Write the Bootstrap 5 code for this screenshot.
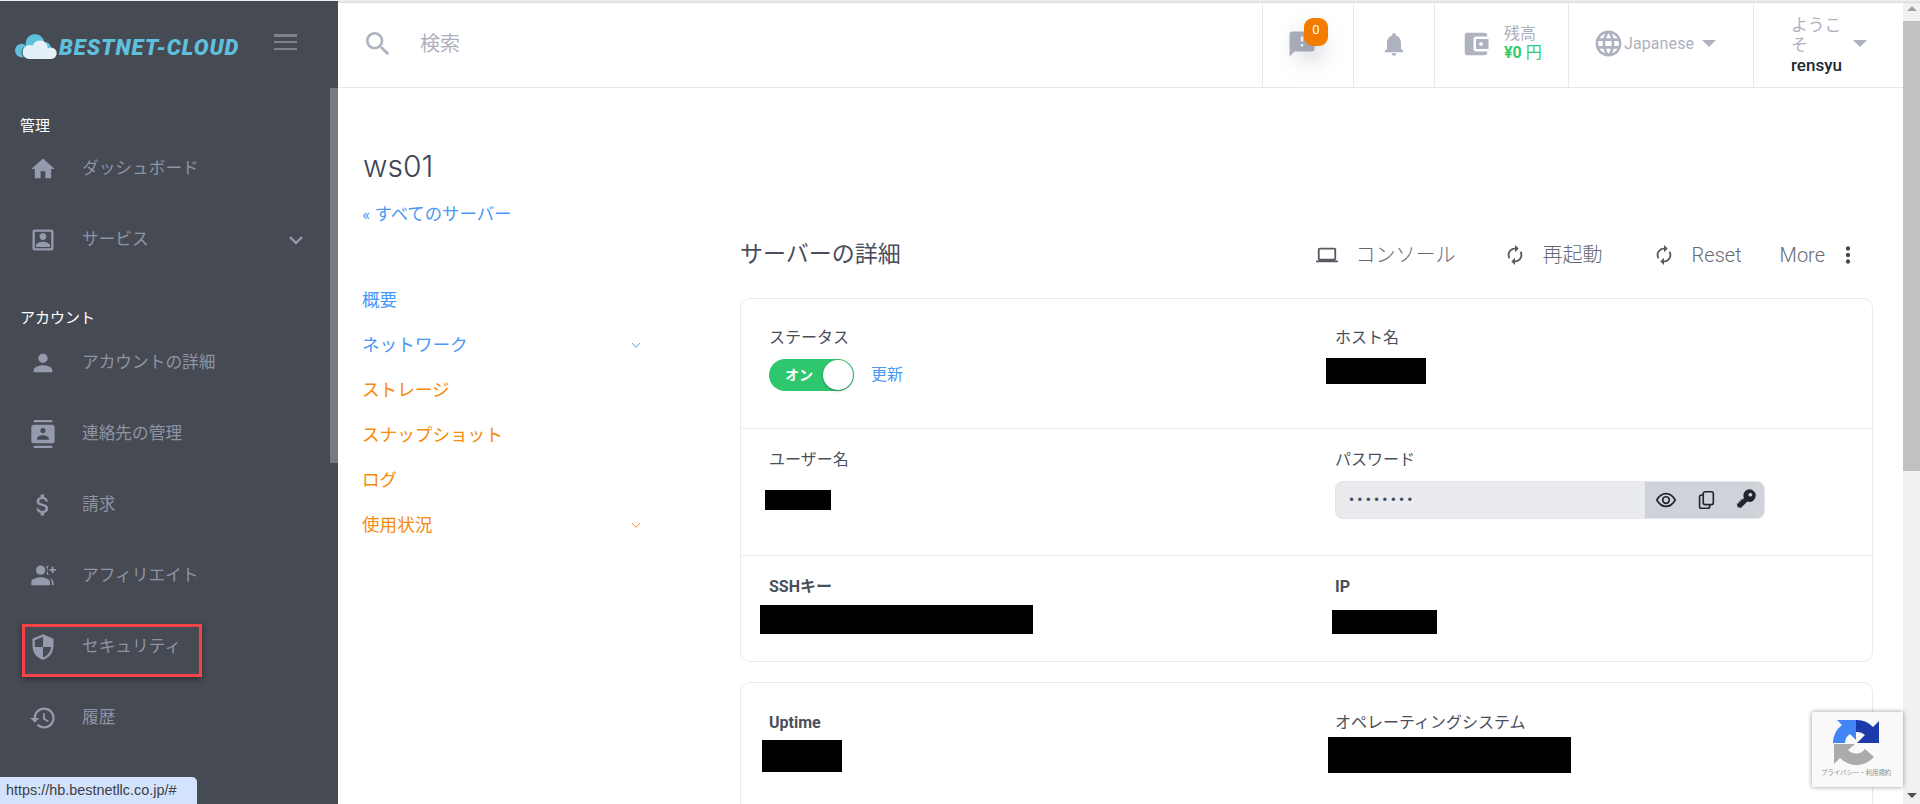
<!DOCTYPE html>
<html lang="ja">
<head>
<meta charset="utf-8">
<title>ws01</title>
<link href="https://cdn.jsdelivr.net/npm/bootstrap@5.3.0/dist/css/bootstrap.min.css" rel="stylesheet">
<style>
html,body{height:804px;overflow:hidden;background:#fff}
body{font-family:Roboto,"Noto Sans CJK JP",sans-serif;font-weight:300;color:#4a4f5c}
.app-shell{height:804px}
.side-panel{width:338px;background:#464a53;flex:none;height:804px;position:relative}
.side-thumb{position:absolute;right:0;top:88px;width:8px;height:375px;background:#787a83}
.brand-zone{height:88px;padding-left:15px;padding-right:41px}
.brand-cloud{width:42px;height:25px;margin-right:2px;margin-top:5px;flex:none}
.brand-word{font-family:Roboto,sans-serif;font-weight:900;font-style:italic;font-size:22px;letter-spacing:1px;color:#5fc0de;white-space:nowrap;margin-top:6px}
.burger{width:23px;height:16px;margin-left:auto;margin-top:-4px;display:flex;flex-direction:column;justify-content:space-between}
.burger i{display:block;height:2.5px;background:#7e808b}
.side-label{color:#fff;font-size:15px;line-height:20px;padding-left:20px;font-weight:400}
.label-first{margin-top:28px;margin-bottom:1px}
.label-next{margin-top:36px;margin-bottom:3px}
.side-item{height:64px;margin-bottom:7px;padding-left:29px;padding-right:30px;color:#8f94a4;font-size:16.7px;font-weight:400;text-decoration:none}
.side-item:hover{color:#8f94a4}
.side-icon{width:28px;height:28px;fill:#959aad;flex:none;margin-right:25px}
.side-caret{width:24px;height:24px;fill:none;stroke:#959aad;stroke-width:2.4;margin-left:auto}
.red-mark{position:absolute;left:22px;top:624px;width:180px;height:53px;border:3px solid #f44347;box-shadow:0 2px 6px rgba(0,0,0,.4)}
.status-tip{position:absolute;left:0;bottom:0;height:27px;width:197px;background:#d3e3fd;border-top-right-radius:5px;color:#3c4043;font:400 14.4px/27px "Liberation Sans",sans-serif;padding-left:6px;white-space:nowrap;z-index:5}
.main-area{flex:1;min-width:0;height:804px;overflow:hidden}
.top-bar{height:88px;border-bottom:1px solid #e7e9ed}
.search-zone{padding-left:24px;color:#aeb1bd;font-size:20px;font-weight:400}
.search-zone svg{width:32px;height:32px;fill:#b0b3c0;margin-right:26px}
.top-cell{height:87px;border-left:1px solid #e7e9ed;flex:none;position:relative}
.cell-msg{width:91px;padding-right:12px}.cell-bell{width:81px}.cell-wallet{width:134px;padding-left:26px}.cell-lang{width:185px}.cell-user{width:150px}
.top-icon{fill:#aeb1c0}
.wallet-pic{margin-right:13px;flex:none}
.count-pill{position:absolute;left:41px;top:18px;width:24px;height:28px;border-radius:9px;background:#f37b00;color:#fff;font-size:13px;font-weight:400;text-align:center;line-height:24px;box-shadow:-6px 14px 22px rgba(90,95,110,.28)}
.bal-word{font-size:16px;line-height:18px;color:#aeb1bd;font-weight:400}
.bal-num{font-size:16px;line-height:18px;color:#2ecc71;font-weight:700;margin-top:1px}
.bal-yen{font-weight:400}
.lang-word{font-size:16px;color:#aeb1bd;font-weight:400;letter-spacing:.1px}
.tri{width:0;height:0;border-left:7px solid transparent;border-right:7px solid transparent;border-top:7px solid #aeb1c0}
.user-stack{width:56px;line-height:20px;font-size:16.8px;color:#aeb1bd;margin-left:37px;font-weight:400;padding-top:2px}
.user-name{color:#23272f;font-weight:500;font-size:17px;line-height:20px;margin-top:0}
.caret-user{margin-left:6px}
.page-body{padding:0 30px 0 25px}
.server-title{font-size:30px;line-height:36px;color:#3e4454;margin:60px 0 0;font-family:Inter,Roboto,sans-serif;font-weight:300}
.back-link{display:block;color:#4a97f5;font-size:17.4px;line-height:24px;margin:18px 0 0 -1px;text-decoration:none;font-weight:400}
.sub-nav{width:377px;flex:none}
.sub-link{display:flex;align-items:center;height:45px;width:279px;font-size:17.6px;font-weight:400;text-decoration:none;justify-content:space-between}
.is-blue{color:#4a97f5}.is-orange{color:#f58a0b}
.sub-link svg{width:10px;height:7px;fill:none;stroke:currentColor;stroke-width:.9}
.sub-list{margin:52px 0 0 -1px}
.detail-zone{flex:1;min-width:0;padding-top:124px}
.detail-head{height:86px}
.detail-title{font-size:23px;color:#4a4f5c;font-weight:400;margin:0}
.act-btn{color:#666a72;font-size:20px;font-weight:300;text-decoration:none;display:flex;align-items:center}
.act-btn svg{fill:#555a62;width:22px;height:22px;flex:none}
.act-1{margin-right:48px}.act-1 svg{margin-right:18px}
.act-2{margin-right:50px}.act-2 svg{margin-right:17px}
.act-3{margin-right:38px}.act-3 svg{margin-right:17px}
.act-4{margin-right:12px}.act-4 svg{margin-left:10px;fill:#444950;width:26px;height:26px}
.info-box{border:1px solid #e8eaf0;border-radius:10px;margin-bottom:20px;background:#fff}
.info-strip{padding:0 28px}
.strip-a{height:130px;border-bottom:1px solid #e8eaf0}
.strip-b{height:127px;border-bottom:1px solid #e8eaf0}
.strip-c{height:105px}
.strip-d{height:140px}
.info-col{flex:1 1 0;min-width:0}
.info-col:first-child{flex:0 0 566px}
.info-name{font-size:16px;line-height:22px;color:#4a4f5c;font-weight:400}
.strong-name{font-weight:700}
.top-a{padding-top:28px}.top-b{padding-top:20px}.top-c{padding-top:20px}.top-d{padding-top:29px}
.power-row{margin-top:10px}
.power-switch{width:85px;height:32px;background:#2fc76d;border-radius:16px;position:relative;color:#fff;font-size:14px;font-weight:700;line-height:32px;padding-left:16px}
.power-knob{position:absolute;right:1px;top:1px;width:30px;height:30px;border-radius:50%;background:#fff;box-shadow:0 1px 3px rgba(0,0,0,.3)}
.refresh-link{color:#4a97f5;font-size:16px;margin-left:17px;text-decoration:none;font-weight:400}
.ink{background:#000}
.ink-host{width:100px;height:26px;margin:9px 0 0 -9px}
.ink-user{width:66px;height:20px;margin:19px 0 0 -4px}
.ink-ssh{width:273px;height:29px;margin:7px 0 0 -9px}
.ink-ip{width:105px;height:24px;margin:12px 0 0 -3px}
.ink-up{width:80px;height:32px;margin:6px 0 0 -7px}
.ink-os{width:243px;height:36px;margin:3px 0 0 -7px}
.pass-box{width:430px;height:38px;border-radius:8px;background:#e9ebef;margin-top:10px;border:1px solid #e2e4e9;overflow:hidden}
.pass-dots{flex:1;padding-left:13px;font-size:14px;letter-spacing:3.3px;color:#454a54;font-weight:700;line-height:36px}
.pass-tools{width:119px;height:38px;background:#ced3da;padding:0 8px 0 10px}
.pass-tools svg{width:22px;height:22px}
.fake-scroll{width:17px;flex:none;background:#f1f1f1;height:804px}
.scroll-arrow{height:17px}
.tri-up{width:0;height:0;border-left:5px solid transparent;border-right:5px solid transparent;border-bottom:5px solid #a3a3a3}
.tri-down{width:0;height:0;border-left:5px solid transparent;border-right:5px solid transparent;border-top:5px solid #505050}
.scroll-thumb{height:450px;background:#c1c1c1;margin-top:4px}
.scroll-gap{flex:1}
.captcha{position:absolute;left:1812px;top:712px;width:91px;height:75px;background:#f9f9f9;box-shadow:0 0 5px rgba(0,0,0,.4);border-radius:2px 0 0 2px;z-index:4}
.captcha svg{width:46px;height:45px;margin:8px 0 0 21px;display:block}
.captcha span{display:block;font-size:6.4px;line-height:9px;color:#8b8b8b;font-weight:400;margin:4px 0 0 9px;white-space:nowrap}
.top-line{position:absolute;left:0;right:0;top:0;height:1px;background:#eceded;z-index:6}
.top-fade{position:absolute;left:338px;right:0;top:0;height:3px;background:linear-gradient(#f2f2f2,#d8dadd);z-index:6}
</style>
</head>
<body>
<div class="top-line"></div>
<div class="top-fade"></div>
<div class="app-shell d-flex">
  <aside class="side-panel">
    <div class="brand-zone d-flex align-items-center">
      <svg class="brand-cloud" viewBox="0 0 42 25"><g fill="#5fc0de"><circle cx="6.700" cy="16.500" r="6.700"/><circle cx="20" cy="9.300" r="9.300"/><circle cx="30" cy="14" r="6"/><rect x="6" y="15" width="20" height="8.200"/></g><path fill="#3f5560" d="M13.500 25c-3.900 0-7-3-7-6.800s3.100-6.800 7-6.800z"/><g fill="#e4f0f8"><circle cx="14.500" cy="18" r="7"/><circle cx="25" cy="14.500" r="8"/><circle cx="36" cy="19.300" r="5.700"/><rect x="14" y="18" width="22" height="7"/></g></svg>
      <span class="brand-word">BESTNET-CLOUD</span>
      <div class="burger"><i></i><i></i><i></i></div>
    </div>
    <div class="side-thumb"></div>
    <div class="side-label label-first">管理</div>
    <a href="#" class="side-item d-flex align-items-center"><svg class="side-icon" viewBox="0 0 24 24"><path d="M10 20v-6h4v6h5v-8h3L12 3 2 12h3v8z"/></svg>ダッシュボード</a>
    <a href="#" class="side-item d-flex align-items-center"><svg class="side-icon" viewBox="0 0 24 24"><path d="M19 5v14H5V5h14m0-2H5c-1.1 0-2 .9-2 2v14c0 1.1.9 2 2 2h14c1.1 0 2-.9 2-2V5c0-1.1-.9-2-2-2zm-7 9c1.65 0 3-1.35 3-3s-1.35-3-3-3-3 1.35-3 3 1.35 3 3 3zm-6 6h12v-1.5c0-2-4-3.1-6-3.1s-6 1.1-6 3.1V18z"/></svg>サービス<svg class="side-caret" viewBox="0 0 24 24"><path d="M6 9l6 6 6-6"/></svg></a>
    <div class="side-label label-next">アカウント</div>
    <a href="#" class="side-item d-flex align-items-center"><svg class="side-icon" viewBox="0 0 24 24"><path d="M12 12c2.21 0 4-1.79 4-4s-1.79-4-4-4-4 1.79-4 4 1.79 4 4 4zm0 2c-2.67 0-8 1.34-8 4v2h16v-2c0-2.66-5.33-4-8-4z"/></svg>アカウントの詳細</a>
    <a href="#" class="side-item d-flex align-items-center"><svg class="side-icon" viewBox="0 0 24 24"><path d="M20 0H4v2h16V0zM4 24h16v-2H4v2zM20 4H4c-1.1 0-2 .9-2 2v12c0 1.1.9 2 2 2h16c1.1 0 2-.9 2-2V6c0-1.1-.9-2-2-2zm-8 2.75c1.24 0 2.25 1.01 2.25 2.25s-1.01 2.25-2.25 2.25S9.75 10.24 9.75 9 10.76 6.75 12 6.75zM17 17H7v-1.5c0-1.67 3.33-2.5 5-2.5s5 .83 5 2.5V17z"/></svg>連絡先の管理</a>
    <a href="#" class="side-item d-flex align-items-center"><svg class="side-icon" viewBox="0 0 24 24"><path d="M11.8 10.9c-2.27-.59-3-1.2-3-2.15 0-1.09 1.01-1.85 2.7-1.85 1.78 0 2.44.85 2.5 2.1h2.21c-.07-1.72-1.12-3.3-3.21-3.81V3h-3v2.16c-1.94.42-3.5 1.68-3.5 3.61 0 2.31 1.91 3.46 4.7 4.13 2.5.6 3 1.48 3 2.41 0 .69-.49 1.79-2.7 1.79-2.06 0-2.87-.92-2.98-2.1h-2.2c.12 2.19 1.76 3.42 3.68 3.83V21h3v-2.15c1.95-.37 3.5-1.5 3.5-3.55 0-2.84-2.43-3.81-4.7-4.4z"/></svg>請求</a>
    <a href="#" class="side-item d-flex align-items-center"><svg class="side-icon" viewBox="0 0 24 24"><path d="M10 11c2.2 0 4-1.8 4-4s-1.8-4-4-4-4 1.8-4 4 1.800 4 4 4zm0 2c-2.7 0-8 1.300-8 4v3h16v-3c0-2.700-5.300-4-8-4zm6-2.100c.4.100.700.100 1 .100-.8-1-1-2.500-1-4 0-1.500.2-3 .9-4-1.200.1-2.400.9-2 1.500.6 1 .9 1.600.9 2.500 0 1.200-.5 2.700-1 3.600zm1 2.500c1.500.9 2.500 2.100 2.500 3.600v3h1.500v-3c0-1.800-2-3-4-3.600zM21 6V4h-1.500v2h-2v1.500h2v2H21v-2h2V6z"/></svg>アフィリエイト</a>
    <a href="#" class="side-item d-flex align-items-center"><svg class="side-icon" viewBox="0 0 24 24"><path d="M12 1L3 5v6c0 5.550 3.840 10.740 9 12 5.160-1.260 9-6.450 9-12V5l-9-4zm0 10.990h7c-.53 4.120-3.280 7.790-7 8.940V12H5V6.300l7-3.110v8.800z"/></svg>セキュリティ</a>
    <a href="#" class="side-item d-flex align-items-center"><svg class="side-icon" viewBox="0 0 24 24"><path d="M13 3c-4.970 0-9 4.030-9 9H1l3.890 3.890.07.14L9 12H6c0-3.870 3.130-7 7-7s7 3.130 7 7-3.130 7-7 7c-1.930 0-3.680-.79-4.940-2.060l-1.420 1.420C8.270 19.990 10.510 21 13 21c4.970 0 9-4.030 9-9s-4.030-9-9-9zm-1 5v5l4.280 2.540.72-1.210-3.500-2.080V8H12z"/></svg>履歴</a>
    <div class="red-mark"></div>
    <div class="status-tip">https://hb.bestnetllc.co.jp/#</div>
  </aside>
  <main class="main-area">
    <header class="top-bar d-flex">
      <div class="search-zone d-flex align-items-center flex-grow-1"><svg viewBox="0 0 24 24"><path d="M15.500 14h-.79l-.28-.27C15.410 12.590 16 11.110 16 9.500 16 5.910 13.090 3 9.500 3S3 5.910 3 9.500 5.910 16 9.500 16c1.610 0 3.090-.59 4.230-1.570l.27.28v.79l5 4.990L20.490 19l-4.990-5zm-6 0C7.010 14 5 11.990 5 9.500S7.010 5 9.500 5 14 7.010 14 9.500 11.990 14 9.500 14z"/></svg>検索</div>
      <div class="top-cell cell-msg d-flex align-items-center justify-content-center"><svg class="top-icon" width="30" height="30" viewBox="0 0 24 24"><path d="M20 2H4c-1.100 0-1.990.9-1.990 2L2 22l4-4h14c1.100 0 2-.9 2-2V4c0-1.100-.9-2-2-2zm-7 12h-2v-2h2v2zm0-4h-2V6h2v4z"/></svg><span class="count-pill">0</span></div>
      <div class="top-cell cell-bell d-flex align-items-center justify-content-center"><svg class="top-icon" width="28" height="28" viewBox="0 0 24 24"><path d="M12 22c1.100 0 2-.9 2-2h-4c0 1.100.89 2 2 2zm6-6v-5c0-3.070-1.640-5.640-4.500-6.320V4c0-.83-.67-1.500-1.500-1.500s-1.500.67-1.500 1.500v.68C7.630 5.360 6 7.920 6 11v5l-2 2v1h16v-1l-2-2z"/></svg></div>
      <div class="top-cell cell-wallet d-flex align-items-center"><svg class="top-icon wallet-pic" width="30" height="30" viewBox="0 0 24 24"><path d="M21 18v1c0 1.100-.9 2-2 2H5c-1.110 0-2-.9-2-2V5c0-1.100.89-2 2-2h14c1.100 0 2 .9 2 2v1h-9c-1.110 0-2 .9-2 2v8c0 1.100.89 2 2 2h9zm-9-2h10V8H12v8zm4-2.500c-.83 0-1.500-.67-1.500-1.500s.67-1.500 1.500-1.500 1.500.67 1.500 1.500-.67 1.500-1.500 1.500z"/></svg><div><div class="bal-word">残高</div><div class="bal-num">¥0 <span class="bal-yen">円</span></div></div></div>
      <div class="top-cell cell-lang d-flex align-items-center ps-4"><svg class="top-icon" width="31" height="31" viewBox="0 0 24 24"><path d="M11.990 2C6.470 2 2 6.480 2 12s4.470 10 9.990 10C17.520 22 22 17.520 22 12S17.520 2 11.990 2zm6.930 6h-2.950c-.32-1.250-.78-2.450-1.380-3.560 1.840.63 3.370 1.910 4.330 3.560zM12 4.040c.83 1.200 1.480 2.530 1.910 3.960h-3.820c.43-1.430 1.080-2.760 1.910-3.960zM4.260 14C4.100 13.360 4 12.690 4 12s.1-1.360.26-2h3.380c-.08.66-.14 1.320-.14 2 0 .68.06 1.340.14 2H4.260zm.82 2h2.950c.32 1.250.78 2.450 1.380 3.560-1.840-.63-3.370-1.900-4.330-3.560zm2.950-8H5.080c.96-1.660 2.490-2.930 4.330-3.560C8.810 5.550 8.350 6.750 8.030 8zM12 19.960c-.83-1.200-1.480-2.530-1.910-3.960h3.820c-.43 1.430-1.080 2.760-1.910 3.960zM14.340 14H9.660c-.09-.66-.16-1.320-.16-2 0-.68.07-1.350.16-2h4.680c.09.65.16 1.320.16 2 0 .68-.07 1.340-.16 2zm.25 5.560c.6-1.110 1.060-2.310 1.380-3.560h2.950c-.96 1.650-2.490 2.930-4.330 3.560zM16.360 14c.08-.66.14-1.320.14-2 0-.68-.06-1.340-.14-2h3.380c.16.64.26 1.310.26 2s-.1 1.360-.26 2h-3.380z"/></svg><span class="lang-word ms-0">Japanese</span><span class="tri ms-2"></span></div>
      <div class="top-cell cell-user d-flex align-items-center"><div class="user-stack">ようこそ<div class="user-name">rensyu</div></div><span class="tri caret-user"></span></div>
    </header>
    <div class="page-body">
      <div class="d-flex">
        <nav class="sub-nav">
          <h1 class="server-title">ws01</h1>
          <a class="back-link" href="#">« すべてのサーバー</a>
          <div class="sub-list">
            <a class="sub-link is-blue" href="#">概要</a>
            <a class="sub-link is-blue" href="#">ネットワーク<svg viewBox="0 0 10 7"><path d="M1 1l4 4.500L9 1"/></svg></a>
            <a class="sub-link is-orange" href="#">ストレージ</a>
            <a class="sub-link is-orange" href="#">スナップショット</a>
            <a class="sub-link is-orange" href="#">ログ</a>
            <a class="sub-link is-orange" href="#">使用状況<svg viewBox="0 0 10 7"><path d="M1 1l4 4.500L9 1"/></svg></a>
          </div>
        </nav>
        <section class="detail-zone">
          <div class="detail-head d-flex align-items-center justify-content-between">
            <h2 class="detail-title">サーバーの詳細</h2>
            <div class="d-flex align-items-center">
              <a class="act-btn act-1" href="#"><svg viewBox="0 0 24 24"><path d="M20 18c1.100 0 1.990-.9 1.990-2L22 6c0-1.100-.9-2-2-2H4c-1.100 0-2 .9-2 2v10c0 1.100.9 2 2 2H0v2h24v-2h-4zM4 6h16v10H4V6z"/></svg>コンソール</a>
              <a class="act-btn act-2" href="#"><svg viewBox="0 0 24 24"><path d="M12 6v3l4-4-4-4v3c-4.420 0-8 3.580-8 8 0 1.570.46 3.030 1.240 4.260L6.700 14.800c-.45-.83-.7-1.790-.7-2.800 0-3.310 2.690-6 6-6zm6.760 1.740L17.300 9.200c.44.84.7 1.790.7 2.800 0 3.310-2.690 6-6 6v-3l-4 4 4 4v-3c4.420 0 8-3.580 8-8 0-1.570-.46-3.030-1.240-4.260z"/></svg>再起動</a>
              <a class="act-btn act-3" href="#"><svg viewBox="0 0 24 24"><path d="M12 6v3l4-4-4-4v3c-4.420 0-8 3.580-8 8 0 1.570.46 3.030 1.240 4.260L6.700 14.800c-.45-.83-.7-1.790-.7-2.800 0-3.310 2.690-6 6-6zm6.760 1.740L17.300 9.200c.44.84.7 1.790.7 2.800 0 3.310-2.690 6-6 6v-3l-4 4 4 4v-3c4.420 0 8-3.580 8-8 0-1.570-.46-3.030-1.240-4.260z"/></svg>Reset</a>
              <a class="act-btn act-4" href="#">More<svg viewBox="0 0 24 24"><path d="M12 8c1.100 0 2-.9 2-2s-.9-2-2-2-2 .9-2 2 .9 2 2 2zm0 2c-1.100 0-2 .9-2 2s.9 2 2 2 2-.9 2-2-.9-2-2-2zm0 6c-1.100 0-2 .9-2 2s.9 2 2 2 2-.9 2-2-.9-2-2-2z"/></svg></a>
            </div>
          </div>
          <div class="info-box">
            <div class="info-strip strip-a top-a d-flex">
              <div class="info-col">
                <div class="info-name">ステータス</div>
                <div class="power-row d-flex align-items-center"><div class="power-switch">オン<span class="power-knob"></span></div><a class="refresh-link" href="#">更新</a></div>
              </div>
              <div class="info-col">
                <div class="info-name">ホスト名</div>
                <div class="ink ink-host"></div>
              </div>
            </div>
            <div class="info-strip strip-b top-b d-flex">
              <div class="info-col">
                <div class="info-name">ユーザー名</div>
                <div class="ink ink-user"></div>
              </div>
              <div class="info-col">
                <div class="info-name">パスワード</div>
                <div class="pass-box d-flex align-items-center">
                  <div class="pass-dots">••••••••</div>
                  <div class="pass-tools d-flex align-items-center justify-content-between">
                    <svg viewBox="0 0 24 24" fill="none" stroke="#22262c" stroke-width="1.800"><path d="M2 12c2.500-4.500 6-7 10-7s7.500 2.500 10 7c-2.500 4.500-6 7-10 7s-7.500-2.500-10-7z"/><circle cx="12" cy="12" r="3.600"/></svg>
                    <svg viewBox="0 0 24 24" fill="none" stroke="#22262c" stroke-width="1.800"><rect x="9" y="3" width="11" height="14" rx="2"/><path d="M9 6.500H7a2 2 0 0 0-2 2V19a2 2 0 0 0 2 2h7a2 2 0 0 0 2-2v-2"/></svg>
                    <svg viewBox="0 0 16 16" fill="#22262c"><path fill-rule="evenodd" transform="rotate(135 8 8)" d="M3.500 12.500a4.500 4.500 0 1 1 4-6.500H14l1.500 2L14 10.500l-1-1-1 1-1-1-1 1-1-1H7.500a4.500 4.500 0 0 1-4 3zM2.500 9.300a1.300 1.300 0 1 0 0-2.600 1.300 1.300 0 0 0 0 2.600z"/></svg>
                  </div>
                </div>
              </div>
            </div>
            <div class="info-strip strip-c top-c d-flex">
              <div class="info-col">
                <div class="info-name strong-name">SSHキー</div>
                <div class="ink ink-ssh"></div>
              </div>
              <div class="info-col">
                <div class="info-name strong-name">IP</div>
                <div class="ink ink-ip"></div>
              </div>
            </div>
          </div>
          <div class="info-box">
            <div class="info-strip strip-d top-d d-flex">
              <div class="info-col">
                <div class="info-name strong-name">Uptime</div>
                <div class="ink ink-up"></div>
              </div>
              <div class="info-col">
                <div class="info-name">オペレーティングシステム</div>
                <div class="ink ink-os"></div>
              </div>
            </div>
          </div>
        </section>
      </div>
    </div>
  </main>
  <div class="fake-scroll d-flex flex-column">
    <div class="scroll-arrow d-flex align-items-center justify-content-center"><span class="tri-up"></span></div>
    <div class="scroll-thumb"></div>
    <div class="scroll-gap"></div>
    <div class="scroll-arrow d-flex align-items-center justify-content-center"><span class="tri-down"></span></div>
  </div>
</div>
<div class="captcha">
  <svg viewBox="0 0 46 45"><path fill="#ababab" d="M1 24V44L7 38A23 23 0 0 0 41 37L32 29A11 11 0 0 1 15 30L22 24Z"/><path fill="#4285f4" d="M0 23A23 23 0 0 1 9 5L4 0H23V20L17 14A11 11 0 0 0 12 23Z"/><path fill="#1c3aa9" d="M23 0A23 23 0 0 1 40 7L46 1V23H24L32 15A11 11 0 0 0 23 12Z"/></svg>
  <span>プライバシー・利用規約</span>
</div>
<script src="https://cdn.jsdelivr.net/npm/bootstrap@5.3.0/dist/js/bootstrap.bundle.min.js"></script>
</body>
</html>
